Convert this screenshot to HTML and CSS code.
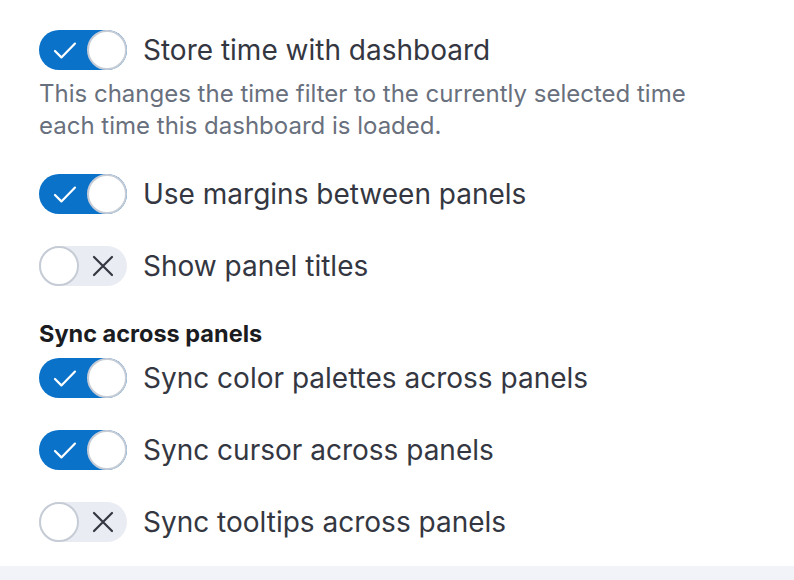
FILE: index.html
```html
<!DOCTYPE html>
<html lang="en">
<head>
  <meta charset="UTF-8" />
  <meta name="viewport" content="width=device-width, initial-scale=1.0"/>
  <title>Dashboard settings</title>
  <link rel="stylesheet" href="styles.css">
</head>
<body>
  <div class="settings">
    <div class="field">
      <label class="switch">
        <button class="track on" type="button" role="switch" aria-checked="true">
          <svg class="icon" viewBox="0 0 16 16"><path d="M3 8.5l3.2 3.2L13 4.8"/></svg>
          <span class="knob"></span>
        </button>
        <span class="label">Store time with dashboard</span>
      </label>
      <p class="help">This changes the time filter to the currently selected time each time this dashboard is loaded.</p>
    </div>

    <div class="field">
      <label class="switch">
        <button class="track on" type="button" role="switch" aria-checked="true">
          <svg class="icon" viewBox="0 0 16 16"><path d="M3 8.5l3.2 3.2L13 4.8"/></svg>
          <span class="knob"></span>
        </button>
        <span class="label">Use margins between panels</span>
      </label>
    </div>

    <div class="field">
      <label class="switch">
        <button class="track off" type="button" role="switch" aria-checked="false">
          <span class="knob"></span>
          <svg class="icon" viewBox="0 0 16 16"><path d="M3.5 3.5l9 9M12.5 3.5l-9 9"/></svg>
        </button>
        <span class="label">Show panel titles</span>
      </label>
    </div>

    <h4 class="group-title">Sync across panels</h4>

    <div class="field">
      <label class="switch">
        <button class="track on" type="button" role="switch" aria-checked="true">
          <svg class="icon" viewBox="0 0 16 16"><path d="M3 8.5l3.2 3.2L13 4.8"/></svg>
          <span class="knob"></span>
        </button>
        <span class="label">Sync color palettes across panels</span>
      </label>
    </div>

    <div class="field">
      <label class="switch">
        <button class="track on" type="button" role="switch" aria-checked="true">
          <svg class="icon" viewBox="0 0 16 16"><path d="M3 8.5l3.2 3.2L13 4.8"/></svg>
          <span class="knob"></span>
        </button>
        <span class="label">Sync cursor across panels</span>
      </label>
    </div>

    <div class="field">
      <label class="switch">
        <button class="track off" type="button" role="switch" aria-checked="false">
          <span class="knob"></span>
          <svg class="icon" viewBox="0 0 16 16"><path d="M3.5 3.5l9 9M12.5 3.5l-9 9"/></svg>
        </button>
        <span class="label">Sync tooltips across panels</span>
      </label>
    </div>
  </div>
  <div class="footer"></div>
</body>
</html>
```

FILE: styles.css
```css
html, body {
  height: 100%;
}
body {
  margin: 0;
  display: flex;
  flex-direction: column;
  overflow: hidden;
  font-family: Inter, "Noto Sans", sans-serif;
  background: #fff;
  color: #343741;
}
.settings {
  padding: 30px 39px 24px;
}
.field {
  margin-bottom: 32px;
}
.field:last-child {
  margin-bottom: 0;
}
.switch {
  display: flex;
  align-items: center;
  gap: 16px;
}
.track {
  display: flex;
  align-items: center;
  justify-content: space-between;
  width: 88px;
  height: 40px;
  padding: 0;
  border: none;
  border-radius: 20px;
  cursor: pointer;
  flex-shrink: 0;
}
.track.on {
  background: #0b72c9;
}
.track.off {
  background: #e9ecf2;
}
.knob {
  width: 40px;
  height: 40px;
  box-sizing: border-box;
  border-radius: 50%;
  background: #fff;
  border: 2px solid #c6ccd6;
}
.icon {
  width: 32px;
  height: 32px;
  fill: none;
  stroke-width: 1.1;
  stroke-linecap: round;
  stroke-linejoin: round;
}
.on .icon {
  stroke: #fff;
  margin-left: 10px;
}
.off .icon {
  stroke: #343741;
  margin-right: 8px;
}
.label {
  font-size: 28px;
  line-height: 40px;
  color: #343741;
}
.help {
  margin: 8px 0 0;
  max-width: 680px;
  font-size: 24px;
  line-height: 32px;
  color: #69707d;
}
.group-title {
  margin: 0 0 8px;
  font-size: 23.5px;
  line-height: 32px;
  font-weight: 700;
  color: #1a1c21;
}
.footer {
  flex: 1;
  background: #f1f3f8;
}
```
